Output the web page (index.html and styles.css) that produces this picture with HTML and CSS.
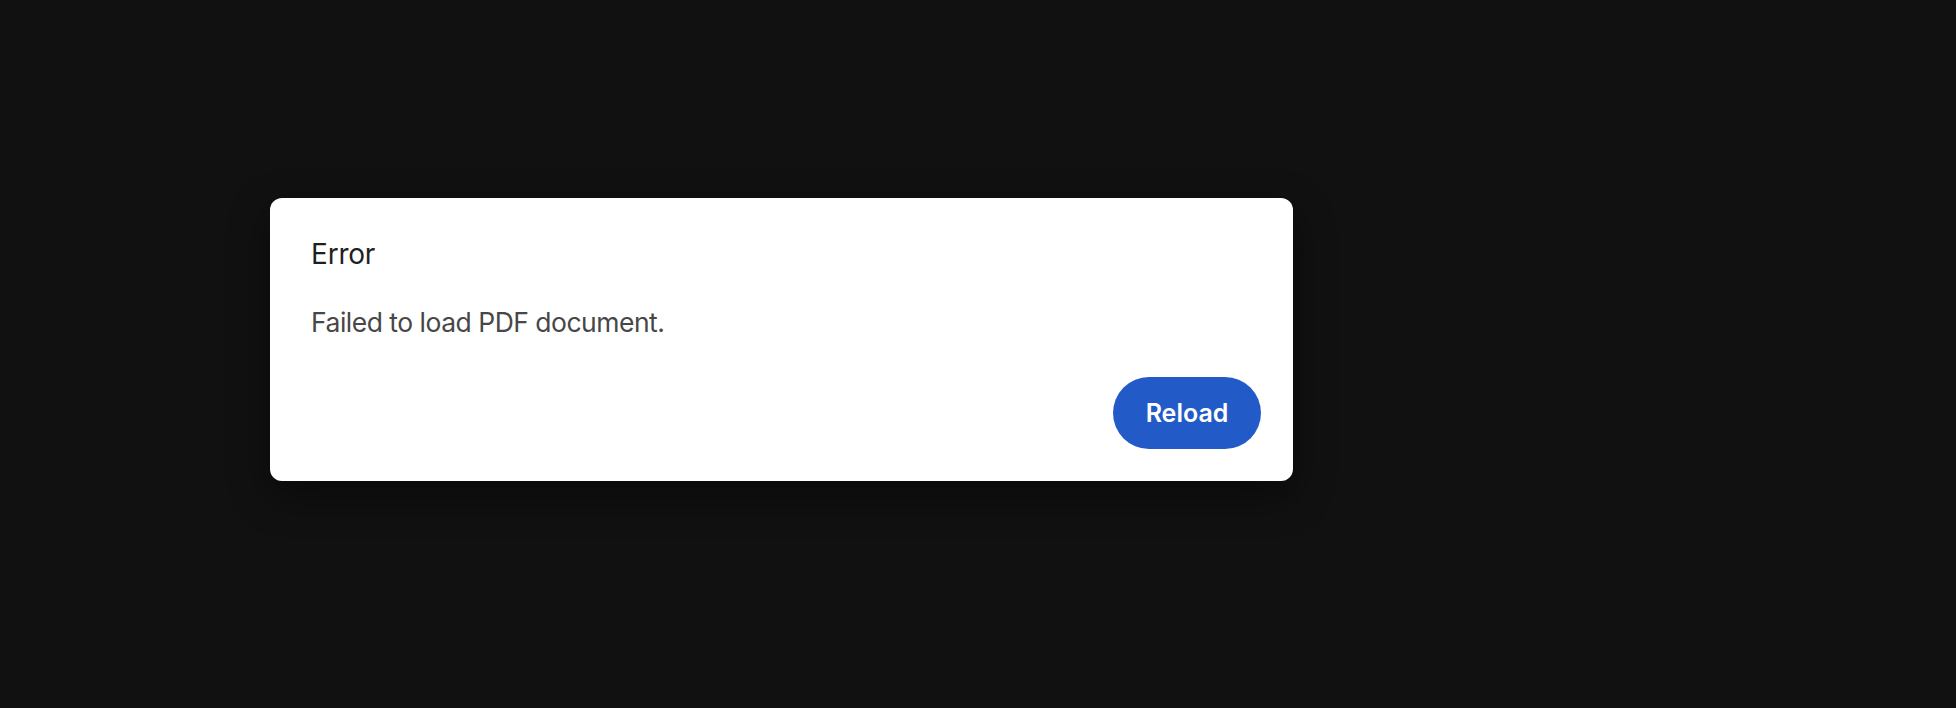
FILE: index.html
```html
<!DOCTYPE html>
<html lang="en">
<head>
<meta charset="utf-8">
<title>Error</title>
<link rel="stylesheet" href="styles.css">
</head>
<body>
<div class="stage">
  <div class="dialog" role="alertdialog">
    <div class="title">Error</div>
    <div class="message">Failed to load PDF document.</div>
    <div class="actions">
      <button class="reload">Reload</button>
    </div>
  </div>
</div>
</body>
</html>
```

FILE: styles.css
```css
html, body {
  margin: 0;
  padding: 0;
  background: #111111;
  height: 100%;
  overflow: hidden;
}

.stage {
  padding: 198px 0 0 270px;
  font-family: Inter, "Liberation Sans", sans-serif;
}

.dialog {
  width: 1023px;
  box-sizing: border-box;
  background: #ffffff;
  border-radius: 12px;
  padding: 40px 32px 32px 41px;
  box-shadow: 0 14px 40px rgba(0, 0, 0, 0.45);
}

.title {
  font-size: 28px;
  line-height: 33px;
  color: #1f1f1f;
  font-weight: 400;
  letter-spacing: -0.2px;
}

.message {
  margin-top: 35px;
  font-size: 26.5px;
  line-height: 33px;
  color: #474747;
  letter-spacing: -0.5px;
}

.actions {
  display: flex;
  justify-content: flex-end;
  margin-top: 38px;
}

.reload {
  width: 148px;
  height: 72px;
  border: none;
  border-radius: 36px;
  background: #225bc8;
  color: #ffffff;
  font-family: Inter, "Liberation Sans", sans-serif;
  font-size: 25px;
  font-weight: 600;
  padding: 0;
  cursor: pointer;
}
```
